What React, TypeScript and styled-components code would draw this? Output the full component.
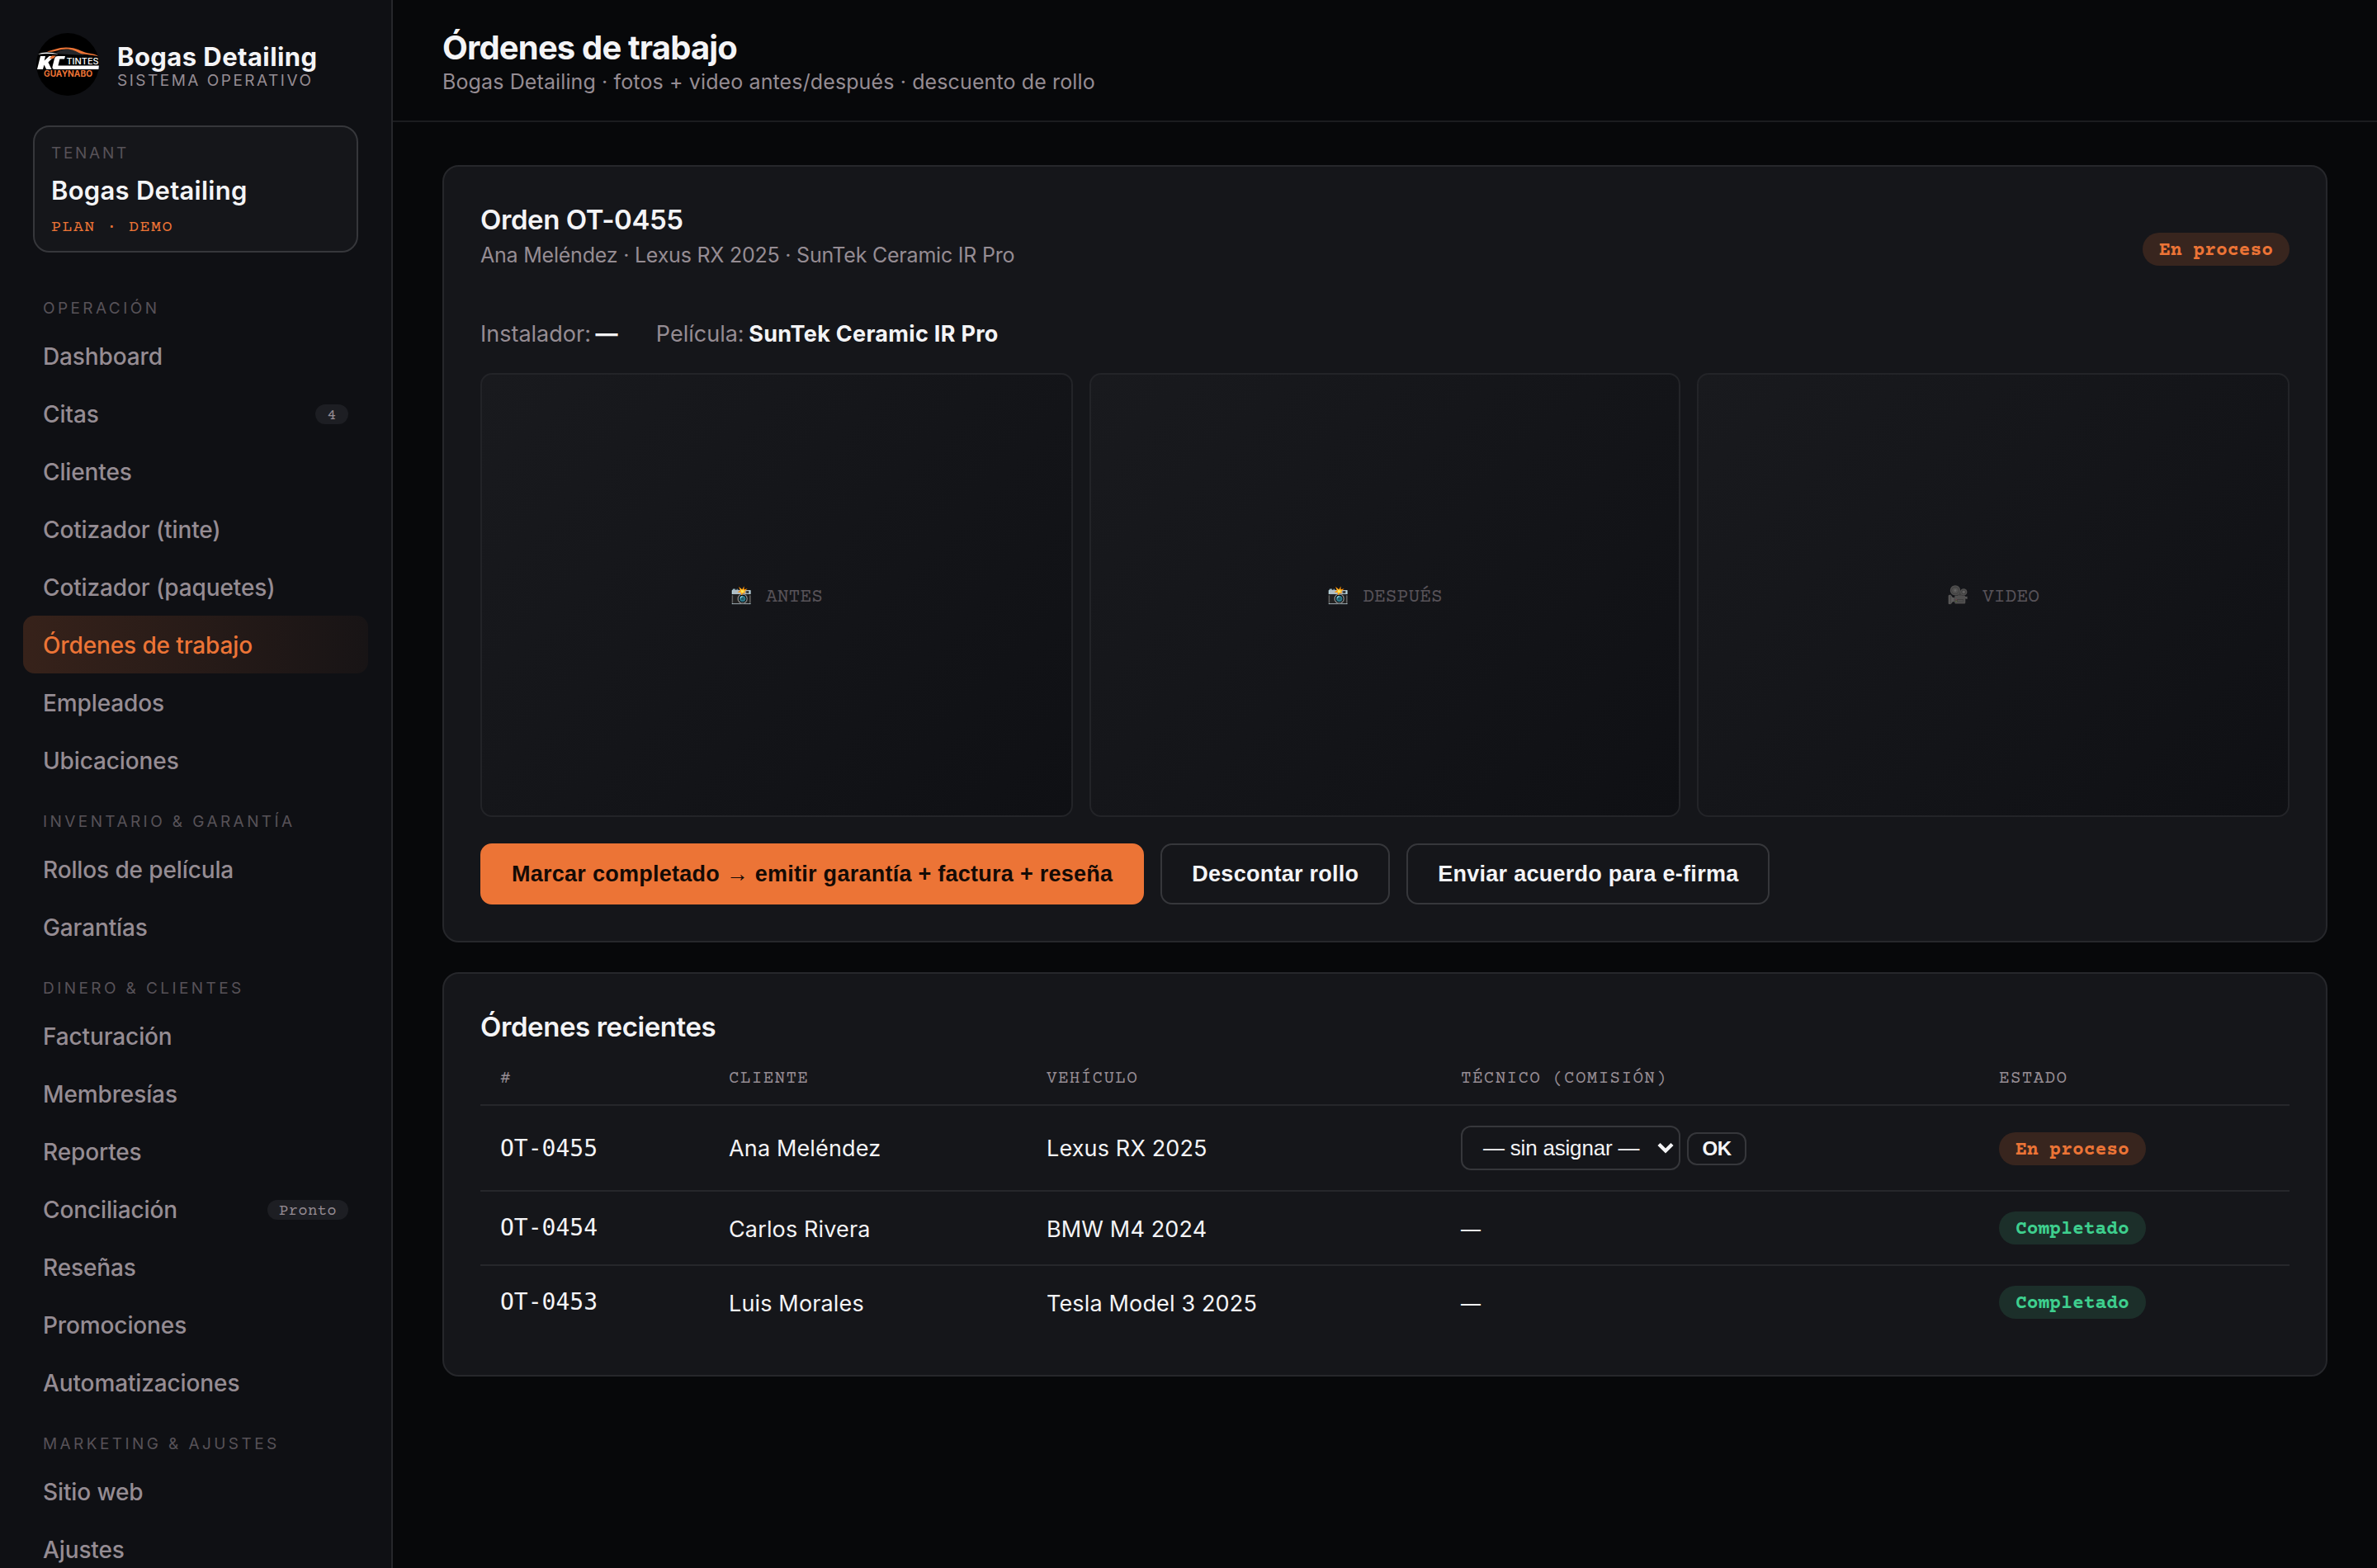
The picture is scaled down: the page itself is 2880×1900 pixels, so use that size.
import React from "react";
import styled, { createGlobalStyle, css } from "styled-components";

const sans = `Inter, "Liberation Sans", sans-serif`;
const arial = `"Liberation Sans", Arial, sans-serif`;
const courier = `"Courier Prime", "Liberation Mono", monospace`;
const code = `"DejaVu Sans Mono", monospace`;

const c = {
  bg: "#07080a",
  side: "#0f1014",
  card: "#15161a",
  line: "#26272b",
  lineStrong: "#36373b",
  text: "#f4f4f6",
  muted: "#958c93",
  dim: "#575258",
  orange: "#ec7436",
  green: "#3ecf8e",
};

const Global = createGlobalStyle`
  * { box-sizing: border-box; }
  body { margin: 0; background: ${c.bg}; color: ${c.text}; font-family: ${sans}; }
`;

const Shell = styled.div`
  display: flex;
  height: 1900px;
  overflow: hidden;
`;

const Sidebar = styled.aside`
  flex: none;
  width: 476px;
  padding: 40px 28px 0;
  background: ${c.side};
  border-right: 2px solid ${c.line};
  overflow: hidden;
`;

const Brand = styled.div`
  display: flex;
  align-items: center;
  gap: 22px;
  height: 76px;
  padding-left: 16px;
`;

const BrandText = styled.div`
  padding-top: 4px;
`;

const BrandName = styled.div`
  font-size: 31px;
  font-weight: 700;
  line-height: 36px;
  letter-spacing: 0.42px;
  white-space: nowrap;
`;

const BrandSub = styled.div`
  font-size: 19px;
  line-height: 22px;
  letter-spacing: 2.5px;
  color: ${c.muted};
  white-space: nowrap;
`;

const Tenant = styled.div`
  height: 154px;
  margin: 36px 12px 28px;
  padding: 20px 20px 0;
  background: ${c.card};
  border: 2px solid ${c.lineStrong};
  border-radius: 20px;
`;

const TenantLabel = styled.div`
  font-size: 19px;
  line-height: 24px;
  letter-spacing: 2.7px;
  color: ${c.dim};
`;

const TenantName = styled.div`
  margin-top: 14px;
  font-size: 31px;
  font-weight: 600;
  line-height: 38px;
  letter-spacing: 0.26px;
`;

const TenantPlan = styled.div`
  margin-top: 14px;
  font-family: ${courier};
  font-size: 20px;
  line-height: 24px;
  letter-spacing: 1.45px;
  color: ${c.orange};
`;

const NavLabel = styled.div`
  height: 62px;
  padding: 28px 24px 0;
  font-size: 19px;
  line-height: 24px;
  letter-spacing: 3.42px;
  color: ${c.dim};
  white-space: nowrap;
`;

const NavItem = styled.a<{ $active?: boolean }>`
  display: flex;
  align-items: center;
  justify-content: space-between;
  height: 70px;
  padding: 1px 24px 0;
  border-radius: 14px;
  font-size: 28px;
  font-weight: 500;
  letter-spacing: -0.12px;
  color: ${c.muted};
  ${(p) =>
    p.$active &&
    css`
      color: ${c.orange};
      background: linear-gradient(90deg, rgba(236, 116, 54, 0.18), rgba(236, 116, 54, 0.04));
    `}
`;

const Badge = styled.span`
  height: 24px;
  padding: 0 14px;
  border-radius: 12px;
  background: #1d1e23;
  font-family: ${courier};
  font-size: 19px;
  font-weight: 400;
  line-height: 27px;
  letter-spacing: 0.29px;
`;

const Main = styled.main`
  flex: 1;
  min-width: 0;
`;

const Header = styled.header`
  height: 148px;
  padding: 34px 60px 0;
  border-bottom: 2px solid #1b1c1f;
`;

const Title = styled.h1`
  margin: 0;
  font-size: 40px;
  font-weight: 700;
  line-height: 48px;
  letter-spacing: -0.84px;
`;

const Subtitle = styled.div`
  font-size: 25px;
  line-height: 34px;
  letter-spacing: 0.12px;
  color: ${c.muted};
`;

const Content = styled.div`
  display: flex;
  flex-direction: column;
  gap: 36px;
  padding: 52px 60px;
`;

const Card = styled.section`
  padding: 44px;
  background: ${c.card};
  border: 2px solid ${c.line};
  border-radius: 20px;
`;

const CardHead = styled.div`
  display: flex;
  justify-content: space-between;
  align-items: center;
  height: 112px;
`;

const HeadText = styled.div`
  align-self: flex-start;
`;

const CardTitle = styled.h2`
  margin: 0;
  font-size: 33px;
  font-weight: 600;
  line-height: 40px;
  letter-spacing: -0.42px;
`;

const CardSub = styled.div`
  margin-top: 7px;
  font-size: 25px;
  line-height: 32px;
  letter-spacing: -0.22px;
  color: ${c.muted};
`;

const Pill = styled.span<{ $tone: "orange" | "green" }>`
  flex: none;
  height: 40px;
  padding: 0 20px;
  border-radius: 20px;
  font-family: ${courier};
  font-size: 23px;
  font-weight: 700;
  line-height: 45px;
  letter-spacing: 0;
  color: ${(p) => c[p.$tone]};
  background: ${(p) => (p.$tone === "orange" ? "#38251e" : "#1c2f2a")};
`;

const Meta = styled.div`
  display: flex;
  gap: 46px;
  margin: 30px 0;
  font-size: 27px;
  line-height: 34px;
  word-spacing: -2px;
  color: ${c.muted};

  strong {
    font-weight: 700;
    letter-spacing: 0.3px;
    word-spacing: 0;
    color: ${c.text};
  }
`;

const Photos = styled.div`
  display: grid;
  grid-template-columns: 718px 716px 718px;
  gap: 20px;
`;

const Photo = styled.div`
  display: flex;
  align-items: center;
  justify-content: center;
  gap: 14px;
  height: 538px;
  border: 2px solid #232428;
  border-radius: 14px;
  background: linear-gradient(135deg, #191a1e, #0f1014);
  font-family: ${courier};
  font-size: 23px;
  line-height: 28px;
  color: ${c.dim};
`;

const PhotoLabel = styled.span`
  padding-top: 5px;
`;

const Emoji = styled.span`
  width: 29px;
  font-family: "Noto Color Emoji", sans-serif;
  font-size: 21px;
  line-height: 28px;
`;

const Actions = styled.div`
  display: flex;
  gap: 20px;
  margin-top: 32px;
`;

const Button = styled.button<{ $primary?: boolean }>`
  height: 74px;
  padding: 0 36px;
  border: 2px solid ${(p) => (p.$primary ? c.orange : c.lineStrong)};
  border-radius: 14px;
  background: ${(p) => (p.$primary ? c.orange : "transparent")};
  color: ${(p) => (p.$primary ? "#140a05" : c.text)};
  font-family: ${arial};
  font-size: 27px;
  font-weight: 700;
  letter-spacing: 0.26px;
  white-space: nowrap;
`;

const Table = styled.div`
  display: flex;
  flex-direction: column;
`;

const Row = styled.div<{ $height: number }>`
  display: grid;
  grid-template-columns: 277px 385px 502px 652px 376px;
  align-items: center;
  height: ${(p) => p.$height}px;
  border-bottom: 2px solid ${c.line};

  &:last-child {
    border-bottom: 0;
  }
`;

const HeadCell = styled.div`
  padding: 13px 24px 0;
  font-family: ${courier};
  font-size: 21px;
  line-height: 26px;
  letter-spacing: 1.3px;
  color: ${c.muted};
`;

const Cell = styled.div<{ $drop?: number }>`
  display: flex;
  align-items: center;
  padding: ${(p) => p.$drop ?? 0}px 24px 0;
  font-size: 27px;
  line-height: 34px;
  letter-spacing: 0.15px;
`;

const CodeCell = styled(Cell)`
  font-family: ${code};
  font-size: 28px;
  letter-spacing: 0;
`;

const DashCell = styled(Cell)`
  font-size: 24px;
`;

const Select = styled.div`
  display: flex;
  align-items: center;
  justify-content: space-between;
  width: 266px;
  height: 54px;
  padding: 0 6px 0 25px;
  border: 2px solid ${c.lineStrong};
  border-radius: 12px;
  font-family: ${arial};
  font-size: 26px;
  letter-spacing: -0.2px;
  white-space: nowrap;
`;

const OkButton = styled.button`
  width: 72px;
  height: 40px;
  margin: 2px 0 0 8px;
  padding: 0;
  border: 2px solid ${c.lineStrong};
  border-radius: 12px;
  background: transparent;
  color: ${c.text};
  font-family: ${arial};
  font-size: 24px;
  font-weight: 700;
  letter-spacing: -0.6px;
`;

function Chevron() {
  return (
    <svg width="20" height="14" viewBox="0 0 20 14" fill="none">
      <path d="M2 2.5L10 10.5L18 2.5" stroke={c.text} strokeWidth="4.4" />
    </svg>
  );
}

function Logo() {
  return (
    <svg width="76" height="76" viewBox="0 0 76 76">
      <defs>
        <clipPath id="disc">
          <circle cx="38" cy="38" r="38" />
        </clipPath>
      </defs>
      <g clipPath="url(#disc)">
        <rect width="76" height="76" fill="#000" />
        <path d="M22 25C28 20 36 19 42 20C50 21 54 24 58 27Z" fill="#24262a" />
        <path d="M13 22.5C20 21 26 17.6 36 17.6C50 17.6 54 23 62 24.2C68 25 73 26 76 28.5C68 26.2 60 26.4 54 25C48 22 44 19.4 36 19.4C27 19.4 23 23.6 13 22.5Z" fill={c.orange} />
        <path d="M2 26C8 22.4 18 23.4 27 25.6C18 24.8 9 24.6 2 26Z" fill="#fff" />
        <path d="M5 28H11L9.6 33.6L15.6 28H22L14.4 35.4L18.6 44H12.2L9.4 38.4L8 44H1Z" fill="#fff" />
        <path d="M15.6 31L19 27.6H23.6L20.6 31Z" fill={c.orange} />
        <path d="M26.4 28H35L34 31.4H28.4L26.4 39.6H76V44H22.2C19.8 44 19 42.8 19.6 40.6L21.8 31.8C22.6 29 23.6 28 26.4 28Z" fill="#fff" />
        <text x="36.5" y="38.4" textLength="39" lengthAdjust="spacingAndGlyphs" fontFamily="Inter" fontWeight="500" fontSize="10.4" fill="#fff">TINTES</text>
        <text x="9" y="52.6" textLength="59" lengthAdjust="spacingAndGlyphs" fontFamily="Inter" fontWeight="700" fontSize="10.2" fill={c.orange}>GUAYNABO</text>
      </g>
    </svg>
  );
}

type Item = { name: string; badge?: string; active?: boolean };

const nav: { label: string; items: Item[] }[] = [
  {
    label: "OPERACIÓN",
    items: [
      { name: "Dashboard" },
      { name: "Citas", badge: "4" },
      { name: "Clientes" },
      { name: "Cotizador (tinte)" },
      { name: "Cotizador (paquetes)" },
      { name: "Órdenes de trabajo", active: true },
      { name: "Empleados" },
      { name: "Ubicaciones" },
    ],
  },
  { label: "INVENTARIO & GARANTÍA", items: [{ name: "Rollos de película" }, { name: "Garantías" }] },
  {
    label: "DINERO & CLIENTES",
    items: [
      { name: "Facturación" },
      { name: "Membresías" },
      { name: "Reportes" },
      { name: "Conciliación", badge: "Pronto" },
      { name: "Reseñas" },
      { name: "Promociones" },
      { name: "Automatizaciones" },
    ],
  },
  { label: "MARKETING & AJUSTES", items: [{ name: "Sitio web" }, { name: "Ajustes" }] },
];

const photos = [
  { icon: "📸", label: "ANTES" },
  { icon: "📸", label: "DESPUÉS" },
  { icon: "🎥", label: "VIDEO" },
];

const columns = ["#", "CLIENTE", "VEHÍCULO", "TÉCNICO (COMISIÓN)", "ESTADO"];

const orders = [
  { id: "OT-0455", client: "Ana Meléndez", car: "Lexus RX 2025", open: true, height: 104, drop: 2, codeDrop: 2 },
  { id: "OT-0454", client: "Carlos Rivera", car: "BMW M4 2024", open: false, height: 90, drop: 4, codeDrop: 0 },
  { id: "OT-0453", client: "Luis Morales", car: "Tesla Model 3 2025", open: false, height: 88, drop: 4, codeDrop: 0 },
];

export default function App() {
  return (
    <>
      <Global />
      <Shell>
        <Sidebar>
          <Brand>
            <Logo />
            <BrandText>
              <BrandName>Bogas Detailing</BrandName>
              <BrandSub>SISTEMA OPERATIVO</BrandSub>
            </BrandText>
          </Brand>
          <Tenant>
            <TenantLabel>TENANT</TenantLabel>
            <TenantName>Bogas Detailing</TenantName>
            <TenantPlan>PLAN · DEMO</TenantPlan>
          </Tenant>
          <nav>
            {nav.map((group) => (
              <React.Fragment key={group.label}>
                <NavLabel>{group.label}</NavLabel>
                {group.items.map((item) => (
                  <NavItem key={item.name} $active={item.active}>
                    {item.name}
                    {item.badge && <Badge>{item.badge}</Badge>}
                  </NavItem>
                ))}
              </React.Fragment>
            ))}
          </nav>
        </Sidebar>
        <Main>
          <Header>
            <Title>Órdenes de trabajo</Title>
            <Subtitle>Bogas Detailing · fotos + video antes/después · descuento de rollo</Subtitle>
          </Header>
          <Content>
            <Card>
              <CardHead>
                <HeadText>
                  <CardTitle>Orden OT-0455</CardTitle>
                  <CardSub>Ana Meléndez · Lexus RX 2025 · SunTek Ceramic IR Pro</CardSub>
                </HeadText>
                <Pill $tone="orange">En proceso</Pill>
              </CardHead>
              <Meta>
                <span>
                  Instalador: <strong>—</strong>
                </span>
                <span>
                  Película: <strong>SunTek Ceramic IR Pro</strong>
                </span>
              </Meta>
              <Photos>
                {photos.map((photo) => (
                  <Photo key={photo.label}>
                    <Emoji>{photo.icon}</Emoji>
                    <PhotoLabel>{photo.label}</PhotoLabel>
                  </Photo>
                ))}
              </Photos>
              <Actions>
                <Button $primary>Marcar completado → emitir garantía + factura + reseña</Button>
                <Button>Descontar rollo</Button>
                <Button>Enviar acuerdo para e-firma</Button>
              </Actions>
            </Card>
            <Card>
              <CardTitle>Órdenes recientes</CardTitle>
              <Table>
                <Row $height={76}>
                  {columns.map((name) => (
                    <HeadCell key={name}>{name}</HeadCell>
                  ))}
                </Row>
                {orders.map((order) => (
                  <Row key={order.id} $height={order.height}>
                    <CodeCell $drop={order.codeDrop}>{order.id}</CodeCell>
                    <Cell $drop={order.drop}>{order.client}</Cell>
                    <Cell $drop={order.drop}>{order.car}</Cell>
                    {order.open ? (
                      <Cell>
                        <Select>
                          — sin asignar —
                          <Chevron />
                        </Select>
                        <OkButton>OK</OkButton>
                      </Cell>
                    ) : (
                      <DashCell $drop={order.drop}>—</DashCell>
                    )}
                    <Cell $drop={order.open ? 2 : 0}>
                      <Pill $tone={order.open ? "orange" : "green"}>{order.open ? "En proceso" : "Completado"}</Pill>
                    </Cell>
                  </Row>
                ))}
              </Table>
            </Card>
          </Content>
        </Main>
      </Shell>
    </>
  );
}
